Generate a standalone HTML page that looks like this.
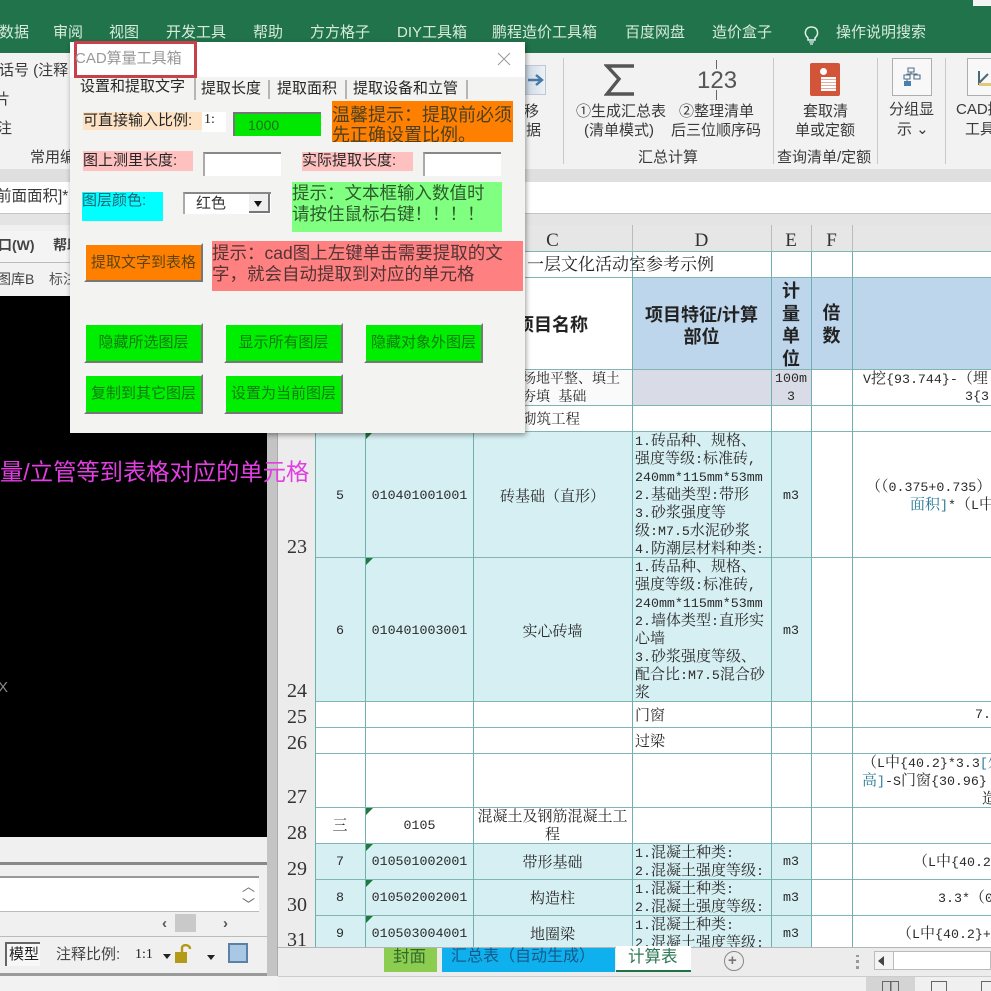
<!DOCTYPE html>
<html lang="zh"><head><meta charset="utf-8"><title>CAD算量工具箱</title>
<style>
html,body{margin:0;padding:0;width:991px;height:991px;overflow:hidden;background:#f1f1f1}
body{position:relative;font-family:"Liberation Sans","Noto Sans CJK SC",sans-serif;color:#333;filter:blur(.35px)}
div,span{position:absolute;box-sizing:border-box}
i{font-style:normal;font-size:13.3px}
.t{white-space:nowrap;line-height:1;font-size:14px}
.c{text-align:center}
.tab{color:#d8eade;font-size:15px;top:25px}
.rb{font-size:15px;color:#3a3a3a}
.s{font-family:"Liberation Serif","Noto Serif CJK SC",serif;color:#222}
.m{font-family:"Liberation Mono","Noto Serif CJK SC",monospace;color:#2a2a2a;font-size:15px;line-height:18px;white-space:nowrap;padding-top:1px}
.n{font-size:13.3px;padding-top:0}
.v{background:#6fb0ae}
.h{background:#7fb6b4;height:1px;left:315px;width:676px}
.f{background:#d6eff2}
.rn{left:279px;width:36px;text-align:center;font-family:"Liberation Serif",serif;font-size:20px;color:#333;line-height:1}
.col{top:231px;font-family:"Liberation Serif",serif;font-size:19px;color:#333;line-height:1;text-align:center}
.gb{background:#00ee00;border:2px solid;border-color:#f6f6f6 #777 #777 #f6f6f6;color:#0f7a0f;font-size:15px;line-height:35px;text-align:center;white-space:nowrap;width:119px;height:40px}
.lab{font-size:15px;line-height:1;white-space:nowrap;color:#262626}
.in{background:#fff;border-top:2px solid #888;border-left:2px solid #aaa}
.dt{font-size:15px;color:#262626;top:81px;white-space:nowrap;line-height:1}
.sep{background:#b5b5b5;width:2px}
.rs{background:#c9c9c9;width:1px;top:58px;height:106px}
.hd{font-size:18px;font-weight:bold;color:#222}
</style></head><body>

<!-- top green -->
<div style="left:0;top:0;width:991px;height:53px;background:#20734a"></div>
<div class="t tab" style="left:-1px">数据</div>
<div class="t tab" style="left:53px">审阅</div>
<div class="t tab" style="left:109px">视图</div>
<div class="t tab" style="left:166px">开发工具</div>
<div class="t tab" style="left:253px">帮助</div>
<div class="t tab" style="left:310px">方方格子</div>
<div class="t tab" style="left:397px">DIY工具箱</div>
<div class="t tab" style="left:492px">鹏程造价工具箱</div>
<div class="t tab" style="left:625px">百度网盘</div>
<div class="t tab" style="left:712px">造价盒子</div>
<svg style="position:absolute;left:802px;top:23px" width="20" height="22" viewBox="0 0 20 22"><path d="M6 15C3 12 3 9 4 7C6 3 13 3 15 7C16 10 16 12 13 15V17H6Z" fill="none" stroke="#e6f0ea" stroke-width="1.5"/><path d="M7 19H12M8 21H11" stroke="#e6f0ea" stroke-width="1.3"/></svg>
<div class="t tab" style="left:836px">操作说明搜索</div>
<div style="left:973px;top:0;width:18px;height:6px;background:#f4f4f4"></div>

<!-- ribbon -->
<div style="left:0;top:53px;width:991px;height:116px;background:#f2f2f2"></div>
<div style="left:0;top:169px;width:991px;height:13px;background:#dfdfdf"></div>
<div style="left:0;top:182px;width:991px;height:32px;background:#fff;border-bottom:1px solid #c4c4c4"></div>
<div style="left:0;top:214px;width:991px;height:11px;background:#e4e4e4"></div>

<div class="t rb" style="left:-1px;top:63px">话号 (注释</div>
<div class="t rb" style="left:-5px;top:92px">片</div>
<div class="t rb" style="left:-3px;top:121px">注</div>
<div class="t rb" style="left:30px;top:150px">常用编</div>
<div class="t rb" style="left:-4px;top:189px;font-size:15.5px">前面面积]*</div>

<div class="t rb" style="left:524px;top:104px">移</div>
<div class="t rb" style="left:526px;top:123px">据</div>
<div style="left:525px;top:65px;width:21px;height:30px;background:linear-gradient(90deg,#c9d5e2,#eef2f6);border:1px solid #bfc8d2;border-left:0"></div>
<svg style="position:absolute;left:527px;top:72px" width="20" height="16" viewBox="0 0 20 16"><path d="M1 8H13M9 3L15 8L9 13" fill="none" stroke="#4878a8" stroke-width="2.4"/></svg>
<div class="rs" style="left:563px"></div>
<svg style="position:absolute;left:604px;top:63px" width="32" height="34" viewBox="0 0 32 34"><path d="M30 3H3L15 16L3 31H30" fill="none" stroke="#555" stroke-width="3.4"/></svg>
<div class="t" style="left:697px;top:69px;font-size:24px;color:#555">123</div>
<div style="left:716px;top:60px;width:1px;height:9px;background:#666"></div>
<div style="left:716px;top:90px;width:1px;height:10px;background:#666"></div>
<div class="t rb" style="left:576px;top:104px">①生成汇总表</div>
<div class="t rb" style="left:584px;top:123px">(清单模式)</div>
<div class="t rb" style="left:679px;top:104px">②整理清单</div>
<div class="t rb" style="left:671px;top:123px">后三位顺序码</div>
<div class="t rb" style="left:638px;top:150px">汇总计算</div>
<div class="rs" style="left:773px"></div>
<div style="left:810px;top:63px;width:30px;height:33px;background:#d2553a;border-radius:2px"></div>
<div style="left:821px;top:77px;width:15px;height:14px;background:repeating-linear-gradient(0deg,#fff 0 2px,#e9a898 2px 3px)"></div>
<div style="left:820px;top:68px;width:7px;height:7px;background:#fff;border-radius:50%"></div>
<div class="t rb" style="left:803px;top:104px">套取清</div>
<div class="t rb" style="left:795px;top:123px">单或定额</div>
<div class="t rb" style="left:777px;top:150px">查询清单/定额</div>
<div class="rs" style="left:877px"></div>
<div style="left:892px;top:58px;width:40px;height:38px;background:#f8f8f8;border:1px solid #aeaeae"></div>
<svg style="position:absolute;left:903px;top:67px" width="18" height="20" viewBox="0 0 18 20"><path d="M5 1H11V5H5ZM1 8H7V12H1ZM11 8H17V12H11ZM8 5V7M4 8V7H14V8M4 12V14" fill="none" stroke="#56708a" stroke-width="1.1"/><rect x="1" y="14" width="7" height="5" fill="#4a7fae"/></svg>
<div class="t rb" style="left:889px;top:102px;font-size:15px">分组显</div>
<div class="t rb" style="left:897px;top:122px">示 ⌄</div>
<div class="rs" style="left:945px"></div>
<div style="left:967px;top:58px;width:30px;height:38px;background:#f8f8f8;border:1px solid #aeaeae"></div>
<svg style="position:absolute;left:978px;top:69px" width="14" height="18" viewBox="0 0 14 18"><path d="M1 2V15H14M1 14L10 5" fill="none" stroke="#4a6a78" stroke-width="2"/><rect x="1" y="14" width="13" height="3" fill="#e2c878"/></svg>
<div class="t rb" style="left:956px;top:102px;font-size:15px">CAD提</div>
<div class="t rb" style="left:965px;top:122px">工具</div>

<!-- CAD window -->
<div style="left:0;top:225px;width:278px;height:751px;background:#f0f0f0"></div>
<div style="left:0;top:231px;width:278px;height:32px;background:#f4f4f4;border-bottom:1px solid #bbb"></div>
<div class="t" style="left:-2px;top:238px;font-size:14px;color:#444;font-weight:bold">口(W)</div>
<div class="t" style="left:53px;top:238px;font-size:14px;color:#444;font-weight:bold">帮助</div>
<div style="left:0;top:263px;width:278px;height:33px;background:#f2f2f2"></div>
<div class="t" style="left:-3px;top:272px;font-size:14px;color:#444">图库B</div>
<div class="t" style="left:49px;top:272px;font-size:14px;color:#555">标注</div>
<div style="left:0;top:296px;width:267px;height:541px;background:#000"></div>
<div class="t" style="left:-2px;top:680px;font-size:15px;color:#888">X</div>
<div style="left:0;top:862px;width:268px;height:3px;background:#888"></div>
<div style="left:0;top:876px;width:259px;height:2px;background:#999"></div>
<div style="left:0;top:878px;width:259px;height:34px;background:#fff;border-bottom:1px solid #bbb"></div>
<div class="t" style="left:242px;top:880px;font-size:13px;color:#666">︿</div>
<div class="t" style="left:242px;top:898px;font-size:13px;color:#666">﹀</div>
<div class="t" style="left:162px;top:916px;font-size:15px;font-weight:bold;color:#555">‹</div>
<div style="left:175px;top:914px;width:21px;height:18px;background:#c9c9c9"></div>
<div class="t" style="left:223px;top:916px;font-size:15px;font-weight:bold;color:#555">›</div>
<div style="left:0;top:936px;width:268px;height:1px;background:#bbb"></div>
<div style="left:5px;top:942px;width:35px;height:24px;background:#f7f7f7;border-top:2px solid #666;border-left:2px solid #666"></div>
<div class="t" style="left:9px;top:947px;font-size:15px;color:#222">模型</div>
<div class="t" style="left:56px;top:947px;font-size:15px;color:#444">注释比例:</div>
<div class="t s" style="left:135px;top:948px;font-size:14px">1:1</div>
<div style="left:163px;top:954px;border:4px solid transparent;border-top:5px solid #222"></div>
<svg style="position:absolute;left:174px;top:944px" width="22" height="20" viewBox="0 0 22 20"><rect x="1" y="8" width="12" height="11" fill="#b59a18"/><path d="M8 8V4C8 0 16 0 16 5" fill="none" stroke="#b59a18" stroke-width="2.4"/></svg>
<div style="left:207px;top:955px;border:4px solid transparent;border-top:5px solid #222"></div>
<div style="left:228px;top:943px;width:20px;height:20px;background:#a9c8e6;border:2px solid #5d80a6"></div>
<div style="left:0;top:973px;width:277px;height:3px;background:#9a9a9a"></div>
<div style="left:267px;top:225px;width:11px;height:751px;background:#c4c4c4;border-right:1px solid #aaa"></div>

<!-- sheet -->
<div style="left:278px;top:225px;width:713px;height:27px;background:#e6e6e6;border-bottom:1px solid #8fa9a7"></div>
<div class="col" style="left:473px;width:159px">C</div>
<div class="col" style="left:632px;width:139px">D</div>
<div class="col" style="left:771px;width:40px">E</div>
<div class="col" style="left:811px;width:41px">F</div>
<div style="left:632px;top:225px;width:1px;height:27px;background:#bbb"></div>
<div style="left:771px;top:225px;width:1px;height:27px;background:#bbb"></div>
<div style="left:811px;top:225px;width:1px;height:27px;background:#bbb"></div>
<div style="left:852px;top:225px;width:1px;height:27px;background:#bbb"></div>
<div style="left:278px;top:252px;width:37px;height:695px;background:#ececec"></div>
<div style="left:315px;top:252px;width:676px;height:695px;background:#fff"></div>

<div style="left:632px;top:278px;width:359px;height:91px;background:#bdd6ec"></div>
<div style="left:473px;top:369px;width:338px;height:36px;background:#fafafa"></div>
<div style="left:632px;top:369px;width:179px;height:36px;background:#d9dce6"></div>
<div class="f" style="left:315px;top:431px;width:496px;height:270px"></div>
<div class="f" style="left:315px;top:843px;width:496px;height:104px"></div>

<div class="h" style="top:251px"></div><div class="h" style="top:277px"></div><div class="h" style="top:369px"></div><div class="h" style="top:405px"></div><div class="h" style="top:431px"></div><div class="h" style="top:557px"></div><div class="h" style="top:701px"></div><div class="h" style="top:727px"></div><div class="h" style="top:753px"></div><div class="h" style="top:807px"></div><div class="h" style="top:843px"></div><div class="h" style="top:879px"></div><div class="h" style="top:915px"></div>
<div class="v" style="left:315px;top:252px;width:1px;height:695px"></div>
<div class="v" style="left:365px;top:252px;width:1px;height:695px"></div>
<div class="v" style="left:473px;top:252px;width:1px;height:695px"></div>
<div class="v" style="left:632px;top:252px;width:1px;height:695px"></div>
<div class="v" style="left:771px;top:252px;width:1px;height:695px"></div>
<div class="v" style="left:811px;top:252px;width:1px;height:695px"></div>
<div class="v" style="left:852px;top:252px;width:1px;height:695px"></div>

<div class="rn" style="top:537px">23</div>
<div class="rn" style="top:681px">24</div>
<div class="rn" style="top:707px">25</div>
<div class="rn" style="top:733px">26</div>
<div class="rn" style="top:787px">27</div>
<div class="rn" style="top:823px">28</div>
<div class="rn" style="top:859px">29</div>
<div class="rn" style="top:895px">30</div>
<div class="rn" style="top:930px">31</div>

<!-- header/content -->
<div class="t s" style="left:527px;top:256px;font-size:17px">一层文化活动室参考示例</div>
<div class="t hd" style="left:516px;top:316px">项目名称</div>
<div class="t c hd" style="left:632px;width:139px;line-height:22px;top:304px">项目特征/计算<br>部位</div>
<div class="t c hd" style="left:771px;top:280px;width:40px;line-height:22.7px">计<br>量<br>单<br>位</div>
<div class="t c hd" style="left:811px;top:302px;width:41px;line-height:23px">倍<br>数</div>

<div class="m" style="left:522px;top:370px;font-size:14px">场地平整、填土</div>
<div class="m" style="left:522px;top:388px;font-size:14px">夯填 基础</div>
<div class="m" style="left:522px;top:411px;font-size:14.5px">砌筑工程</div>
<div class="m c n" style="left:771px;top:370px;width:40px">100m<br>3</div>
<div class="m" style="left:863px;top:370px"><i>V</i>挖<i>{93.744}-</i>（埋</div>
<div class="m n" style="left:965px;top:388px">3{3.</div>

<div class="m c n" style="left:315px;top:487px;width:50px">5</div>
<div class="m c n" style="left:366px;top:487px;width:107px">010401001001</div>
<div class="m c" style="left:473px;top:488px;width:159px">砖基础（直形）</div>
<div class="m" style="left:635px;top:432px"><i>1.</i>砖品种、规格、<br>强度等级<i>:</i>标准砖<i>,</i><br><i>240mm*115mm*53mm</i><br><i>2.</i>基础类型<i>:</i>带形<br><i>3.</i>砂浆强度等<br>级<i>:M7.5</i>水泥砂浆<br><i>4.</i>防潮层材料种类<i>:</i></div>
<div class="m c n" style="left:771px;top:487px;width:40px">m3</div>
<div class="m" style="left:866px;top:478px">（（<i>0.375+0.735</i>）</div>
<div class="m" style="left:910px;top:496px"><b style="font-weight:normal;color:#2a7a96">面积<i>]</i></b><i>*</i>（<i>L</i>中</div>

<div class="m c n" style="left:315px;top:622px;width:50px">6</div>
<div class="m c n" style="left:366px;top:622px;width:107px">010401003001</div>
<div class="m c" style="left:473px;top:623px;width:159px">实心砖墙</div>
<div class="m" style="left:635px;top:558px"><i>1.</i>砖品种、规格、<br>强度等级<i>:</i>标准砖<i>,</i><br><i>240mm*115mm*53mm</i><br><i>2.</i>墙体类型<i>:</i>直形实<br>心墙<br><i>3.</i>砂浆强度等级、<br>配合比<i>:M7.5</i>混合砂<br>浆</div>
<div class="m c n" style="left:771px;top:622px;width:40px">m3</div>

<div class="m" style="left:635px;top:707px">门窗</div>
<div class="m n" style="left:975px;top:706px">7.</div>
<div class="m" style="left:635px;top:733px">过梁</div>
<div class="m" style="left:862px;top:754px">（<i>L</i>中<i>{40.2}*3.3</i><b style="font-weight:normal;color:#2a7a96"><i>[</i>外</b></div>
<div class="m" style="left:862px;top:772px"><b style="font-weight:normal;color:#2a7a96">高<i>]</i></b><i>-S</i>门窗<i>{30.96}</i></div>
<div class="m" style="left:982px;top:790px">造</div>

<div class="m c" style="left:315px;top:817px;width:50px">三</div>
<div class="m c n" style="left:366px;top:817px;width:107px">0105</div>
<div class="m c" style="left:473px;top:808px;width:159px">混凝土及钢筋混凝土工<br>程</div>

<div class="m c n" style="left:315px;top:853px;width:50px">7</div>
<div class="m c n" style="left:366px;top:853px;width:107px">010501002001</div>
<div class="m c" style="left:473px;top:854px;width:159px">带形基础</div>
<div class="m" style="left:635px;top:844px"><i>1.</i>混凝土种类<i>:</i><br><i>2.</i>混凝土强度等级<i>:</i></div>
<div class="m c n" style="left:771px;top:853px;width:40px">m3</div>
<div class="m" style="left:913px;top:853px">（<i>L</i>中<i>{40.2}</i></div>

<div class="m c n" style="left:315px;top:889px;width:50px">8</div>
<div class="m c n" style="left:366px;top:889px;width:107px">010502002001</div>
<div class="m c" style="left:473px;top:890px;width:159px">构造柱</div>
<div class="m" style="left:635px;top:880px"><i>1.</i>混凝土种类<i>:</i><br><i>2.</i>混凝土强度等级<i>:</i></div>
<div class="m c n" style="left:771px;top:889px;width:40px">m3</div>
<div class="m" style="left:938px;top:889px"><i>3.3*</i>（<i>0</i></div>

<div class="m c n" style="left:315px;top:925px;width:50px">9</div>
<div class="m c n" style="left:366px;top:925px;width:107px">010503004001</div>
<div class="m c" style="left:473px;top:926px;width:159px;height:21px;overflow:hidden">地圈梁</div>
<div class="m" style="left:635px;top:916px;height:31px;overflow:hidden"><i>1.</i>混凝土种类<i>:</i><br><i>2.</i>混凝土强度等级<i>:</i></div>
<div class="m c n" style="left:771px;top:925px;width:40px">m3</div>
<div class="m" style="left:897px;top:925px">（<i>L</i>中<i>{40.2}+L</i></div>

<!-- green corners -->
<svg style="position:absolute;left:365px;top:0" width="8" height="930" viewBox="0 0 8 930"><path fill="#1f7a3e" d="M1 432H8L1 439ZM1 558H8L1 565ZM1 808H8L1 815ZM1 844H8L1 851ZM1 880H8L1 887ZM1 916H8L1 923Z"/></svg>

<!-- sheet tabs -->
<div style="left:278px;top:947px;width:713px;height:29px;background:#ececec;border-top:1px solid #b5b5b5"></div>
<div style="left:384px;top:948px;width:53px;height:24px;background:#8ccc50"></div>
<div class="t" style="left:393px;top:949px;font-size:16.5px;color:#2f6a2a">封面</div>
<div style="left:442px;top:948px;width:173px;height:24px;background:#0fb0ee"></div>
<div class="t" style="left:451px;top:949px;font-size:16px;color:#175a88">汇总表（自动生成）</div>
<div style="left:616px;top:946px;width:75px;height:26px;background:#fff;border-bottom:2px solid #217346"></div>
<div class="t" style="left:628px;top:949px;font-size:16.5px;color:#2f7a55">计算表</div>
<div style="left:724px;top:951px;width:20px;height:20px;border:1.5px solid #888;border-radius:50%"></div>
<div class="t" style="left:728px;top:953px;font-size:15px;color:#777;font-weight:bold">+</div>
<div style="left:856px;top:955px;width:3px;height:14px;background:repeating-linear-gradient(0deg,#999 0 3px,transparent 3px 6px)"></div>
<div style="left:874px;top:951px;width:117px;height:19px;background:#fff;border:1px solid #bbb"></div>
<div style="left:874px;top:951px;width:20px;height:19px;background:#f4f4f4;border:1px solid #bbb"></div>
<div style="left:878px;top:956px;border:5px solid transparent;border-right:6px solid #444;border-left:0"></div>
<div style="left:278px;top:976px;width:713px;height:15px;background:#f0f0f0;border-top:1px solid #ccc"></div>
<div style="left:0;top:976px;width:278px;height:15px;background:#f2f2f2"></div>
<div style="left:866px;top:977px;width:49px;height:14px;background:#d4d4d4"></div>
<div style="left:882px;top:981px;width:17px;height:10px;border:1.5px solid #666;border-bottom:0;background:linear-gradient(90deg,transparent 7px,#666 7px,#666 8.5px,transparent 8.5px)"></div>
<div style="left:931px;top:981px;width:16px;height:10px;border:1.5px solid #666;border-bottom:0"></div>
<div style="left:981px;top:981px;width:12px;height:10px;border:1.5px solid #666;border-bottom:0"></div>

<!-- Dialog -->
<div style="left:70px;top:42px;width:455px;height:391px;background:#f3f3f1;box-shadow:1px 2px 5px rgba(0,0,0,.4)"></div>
<div style="left:70px;top:42px;width:455px;height:35px;background:#fff"></div>
<div style="left:74px;top:41px;width:123px;height:37px;border:3px solid #c8404a"></div>
<div class="t" style="left:75px;top:51px;font-size:15px;color:#999;white-space:nowrap">CAD算量工具箱</div>
<svg style="position:absolute;left:497px;top:52px" width="14" height="14" viewBox="0 0 14 14"><path d="M1 1L13 13M13 1L1 13" stroke="#999" stroke-width="1"/></svg>

<div class="dt" style="left:80px;top:79px">设置和提取文字</div>
<div class="sep" style="left:194px;top:78px;height:22px"></div>
<div class="dt" style="left:201px">提取长度</div>
<div class="sep" style="left:268px;top:80px;height:19px"></div>
<div class="dt" style="left:277px">提取面积</div>
<div class="sep" style="left:345px;top:80px;height:19px"></div>
<div class="dt" style="left:353px">提取设备和立管</div>
<div class="sep" style="left:466px;top:80px;height:19px"></div>

<div style="left:83px;top:112px;width:119px;height:18px;background:#fde3c4"></div>
<div class="lab" style="left:83px;top:113px">可直接输入比例:</div>
<div style="left:202px;top:112px;width:24px;height:20px;background:#fff"></div>
<div class="t s" style="left:204px;top:113px;font-size:14px">1:</div>
<div style="left:233px;top:112px;width:88px;height:24px;background:#00e800;border-top:2px solid #777;border-left:2px solid #777"></div>
<div class="t" style="left:248px;top:118px;font-size:14px;color:#1c6d1c">1000</div>
<div style="left:332px;top:101px;width:181px;height:41px;background:#ff8000"></div>
<div class="t" style="left:332px;top:105px;font-size:18px;line-height:20px;color:#4d4020;width:181px;overflow:hidden;height:37px">温馨提示：提取前必须<br>先正确设置比例。</div>

<div style="left:83px;top:151px;width:110px;height:20px;background:#ffc0c0"></div>
<div class="lab" style="left:83px;top:153px">图上测里长度:</div>
<div class="in" style="left:203px;top:152px;width:78px;height:24px"></div>
<div style="left:302px;top:152px;width:111px;height:19px;background:#ffc0c0"></div>
<div class="lab" style="left:302px;top:153px">实际提取长度:</div>
<div class="in" style="left:423px;top:152px;width:78px;height:24px"></div>

<div style="left:82px;top:192px;width:81px;height:29px;background:#00ffff"></div>
<div class="lab" style="left:82px;top:193px;color:#1f6474">图层颜色:</div>
<div style="left:183px;top:192px;width:88px;height:22px;background:#fff;border-top:2px solid #888;border-left:2px solid #aaa"></div>
<div class="t" style="left:196px;top:196px;font-size:15px;color:#333">红色</div>
<div style="left:249px;top:194px;width:21px;height:19px;background:#efefef;border-right:2px solid #777;border-bottom:2px solid #777"></div>
<div style="left:254px;top:201px;border:4px solid transparent;border-top:6px solid #111"></div>

<div style="left:292px;top:182px;width:210px;height:50px;background:#80ff80"></div>
<div class="t" style="left:292px;top:183px;font-size:17.5px;line-height:21px;color:#2c5c2c">提示：文本框输入数值时<br>请按住鼠标右键！！！！</div>

<div style="left:84px;top:243px;width:119px;height:39px;background:#ff8000;border:2px solid;border-color:#f6f6f6 #777 #777 #f6f6f6;color:#5e4410;font-size:15px;line-height:35px;text-align:center;white-space:nowrap">提取文字到表格</div>
<div style="left:212px;top:241px;width:311px;height:50px;background:#ff8080"></div>
<div class="t" style="left:212px;top:243px;font-size:17.5px;line-height:21px;color:#523434">提示：cad图上左键单击需要提取的文<br>字，就会自动提取到对应的单元格</div>

<div class="gb" style="left:84px;top:323px">隐藏所选图层</div>
<div class="gb" style="left:224px;top:323px">显示所有图层</div>
<div class="gb" style="left:364px;top:323px">隐藏对象外图层</div>
<div class="gb" style="left:84px;top:374px">复制到其它图层</div>
<div class="gb" style="left:224px;top:374px">设置为当前图层</div>

<!-- Magenta -->
<div class="t" style="left:0;top:461px;font-size:23.3px;color:#e23ee2;white-space:nowrap">量/立管等到表格对应的单元格</div>
</body></html>
